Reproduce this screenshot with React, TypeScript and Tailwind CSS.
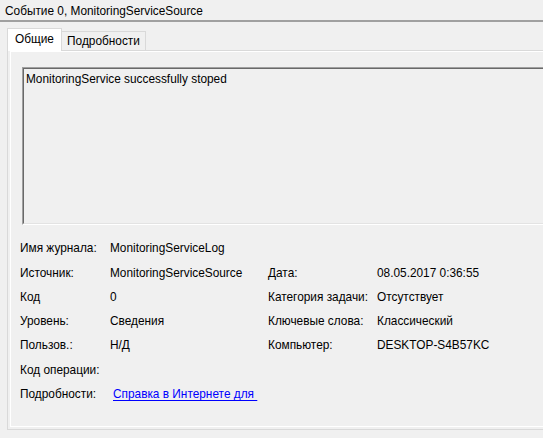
import React from "react";

const rows: [string, React.ReactNode, string, string][] = [
  ["Имя журнала:", "MonitoringServiceLog", "", ""],
  ["Источник:", "MonitoringServiceSource", "Дата:", "08.05.2017 0:36:55"],
  ["Код", "0", "Категория задачи:", "Отсутствует"],
  ["Уровень:", "Сведения", "Ключевые слова:", "Классический"],
  ["Пользов.:", "Н/Д", "Компьютер:", "DESKTOP-S4B57KC"],
  ["Код операции:", "", "", ""],
];

export default function App() {
  return (
    <div
      className="w-[543px] h-[438px] bg-[#f0f0f0] overflow-hidden text-[11.85px] text-black relative"
      style={{ fontFamily: '"Liberation Sans", Arial, sans-serif' }}
    >
      <div className="h-[20px] pl-[5px] pt-[1px] leading-[20px]">Событие 0, MonitoringServiceSource</div>
      <div className="h-[2px] bg-[#a0a0a0]" />
      <div className="h-[6px]" />
      {/* tabs */}
      <div className="flex items-end pl-[7px] h-[22px] relative z-10">
        <div className="w-[55px] h-[23px] bg-white border border-b-0 border-[#d9d9d9] flex items-center justify-center pb-[1px] -mb-[1px]">
          Общие
        </div>
        <div className="w-[84px] h-[19px] bg-[#f0f0f0] border border-l-0 border-b-0 border-[#d9d9d9] flex items-center justify-center pt-[1px]">
          Подробности
        </div>
      </div>
      {/* panel */}
      <div className="ml-[7px] h-[380px] border border-r-0 border-[#d9d9d9] bg-[#f0f0f0] pl-[2px] pb-[2px]">
        <div className="h-full border-l border-t border-b border-white pl-[11px] pt-[15px]">
          <div className="h-[158px] border-t border-l border-[#a0a0a0] border-b border-b-white">
            <div className="h-full border-t border-l border-[#696969] border-b border-b-[#e3e3e3] pl-[2px] pt-[3px] leading-[15px]">
              MonitoringService successfully stoped
            </div>
          </div>
          <div className="pt-[12px] -ml-[2px]">
            {rows.map((r, i) => (
              <div key={i} className="grid grid-cols-[90px_158px_109px_1fr] h-[24.3px] items-center">
                <div>{r[0]}</div>
                <div>{r[1]}</div>
                <div>{r[2]}</div>
                <div>{r[3]}</div>
              </div>
            ))}
            <div className="grid grid-cols-[90px_1fr] h-[24.3px] items-center">
              <div>Подробности:</div>
              <div className="pl-[3px]">
                <span className="text-[#0000ff] underline underline-offset-[2px]">Справка в Интернете для&nbsp;</span>
              </div>
            </div>
          </div>
        </div>
      </div>
    </div>
  );
}
